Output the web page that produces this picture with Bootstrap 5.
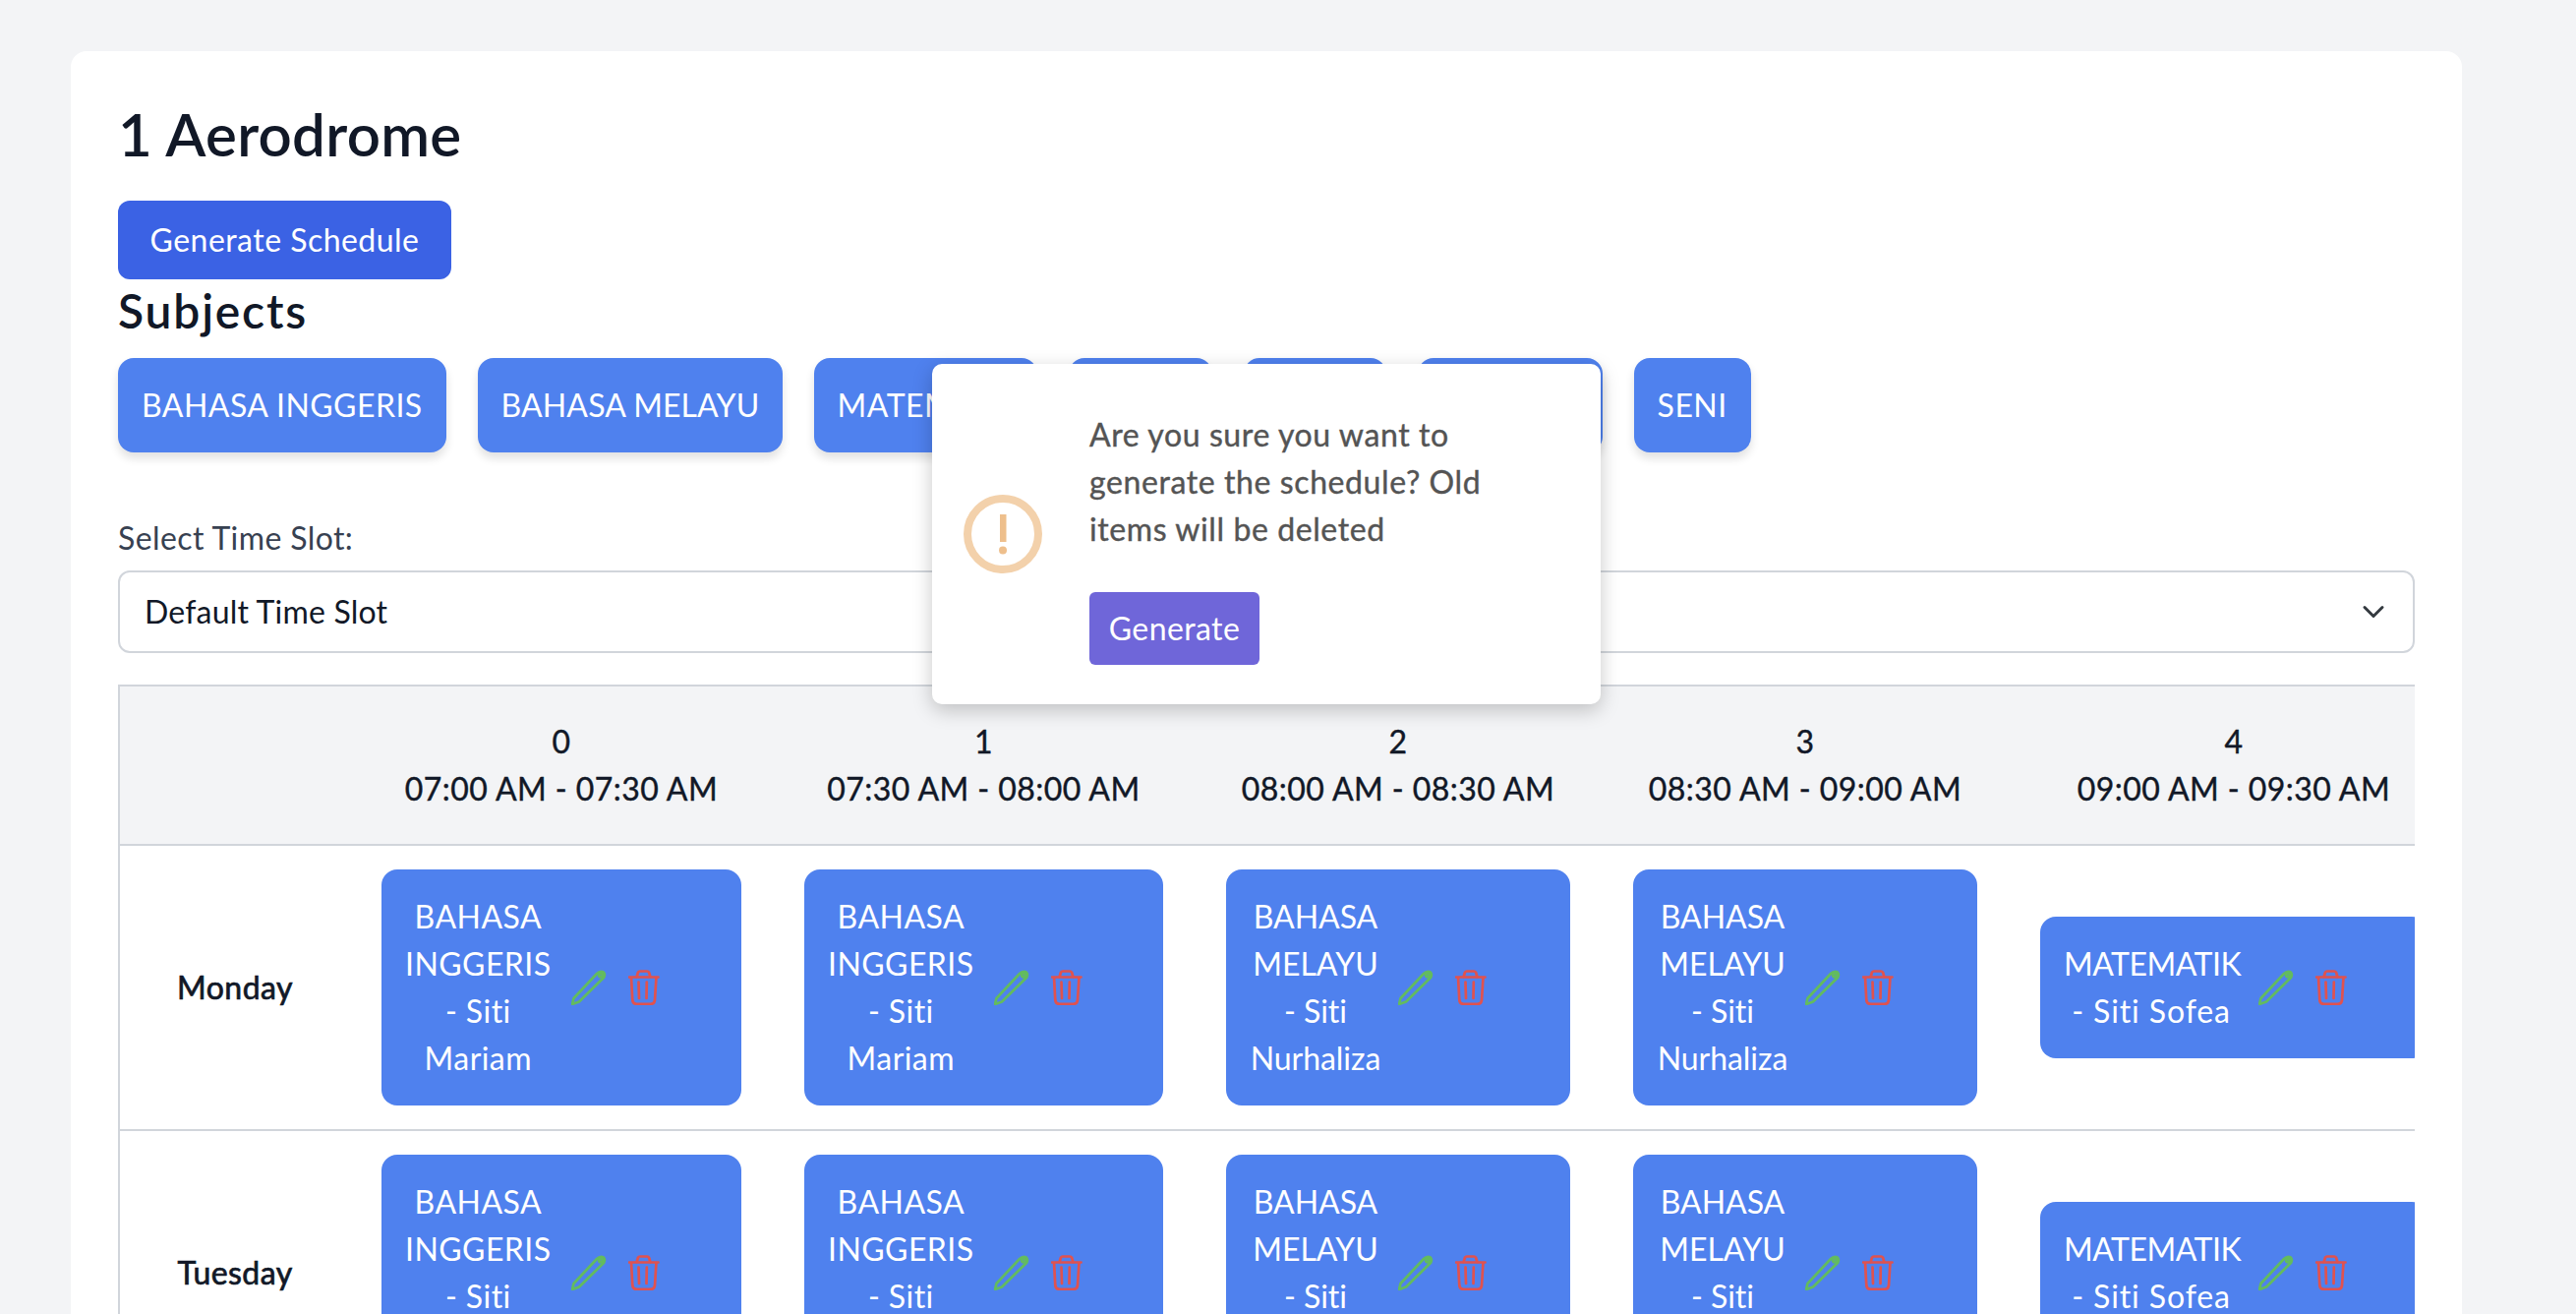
<!DOCTYPE html>
<html lang="en">
<head>
<meta charset="utf-8">
<title>1 Aerodrome</title>
<link rel="stylesheet" href="https://cdn.jsdelivr.net/npm/bootstrap@5.3.0/dist/css/bootstrap.min.css">
<style>
html,body{height:100%;}
body{background:#f3f4f6;font-family:"Lato","Liberation Sans",sans-serif;color:#111827;font-size:32px;line-height:48px;letter-spacing:.45px;}
.page-wrap{padding:52px 116px 0 72px;}
.main-panel{background:#fff;border-radius:16px;padding:48px;position:relative;}
.page-title{font-family:inherit;font-size:60px;line-height:72px;font-weight:600;margin:0 0 32px;color:#111827;letter-spacing:.3px;}
.gen-btn{display:block;background:#3b62e4;color:#fff;border:0;border-radius:12px;height:80px;width:339px;padding:0;font-size:32px;line-height:48px;letter-spacing:.47px;}
.section-title{font-size:48px;line-height:64px;font-weight:600;margin:0 0 16px;color:#111827;letter-spacing:1.8px;}
.subject-row{gap:32px;}
.subject-chip{background:#4f81ee;color:#fff;border-radius:16px;padding:24px;height:96px;box-shadow:0 6px 10px rgba(0,0,0,.12);white-space:nowrap;overflow:hidden;}
.chip-w2{width:310px;flex:none;letter-spacing:.1px;}.chip-w3{width:227px;flex:none;}.chip-w4{width:146px;flex:none;}.chip-w5{width:145px;flex:none;}.chip-w6{width:188px;flex:none;}.chip-w7{width:119px;flex:none;}
.slot-label{font-size:32px;line-height:40px;color:#374151;margin:67px 0 0;padding:0;display:block;height:53px;letter-spacing:.4px;}
.slot-select{height:84px;font-size:32px;line-height:48px;padding:16px 25px;border:2px solid #d1d5db;border-radius:12px;color:#111827;background-size:32px 24px;background-position:right 24px center;font-family:inherit;letter-spacing:.2px;}
.table-clip{overflow:hidden;margin-top:32px;}
.sched-table{table-layout:fixed;width:2379px;margin:0;border-collapse:separate;border-spacing:0;border-left:2px solid #d1d5db;border-top:2px solid #d1d5db;box-sizing:content-box;}
.sched-table>:not(caption)>*>*{padding:24px 32px;border-bottom:2px solid #d1d5db;box-shadow:none;background:transparent;color:#111827;}
.sched-table>thead>tr>th{background:#f3f4f6;padding:32px 16px;font-weight:400;-webkit-text-stroke:.4px #111827;text-align:center;height:162px;}
.sched-table>tbody>tr>th{font-weight:400;-webkit-text-stroke:.7px #111827;text-align:center;vertical-align:middle;padding:24px 0;}
.sched-table>tbody>tr>td{vertical-align:middle;}
.c-day{width:234px}.c-a{width:430px}.c-b{width:429px}.c-c{width:414px}.c-d{width:414px}.c-e{width:458px}
.slot-chip{background:#4f81ee;color:#fff;border-radius:16px;padding:24px;display:flex;align-items:center;}
.slot-text{text-align:center;margin-right:20px;}
.slot-text-nur{width:134px;flex:none;letter-spacing:-.05px;margin-right:17px;}
.slot-text-wide{width:178px;flex:none;}
.tight-line{letter-spacing:-.5px;}
.loose-line{letter-spacing:.9px;}
.ico-edit{display:block;width:36px;height:36px;flex:none;color:#63bb5f;margin-right:22px;stroke-width:2.7;}
.ico-del{display:block;width:32px;height:36px;flex:none;color:#e0524f;stroke-width:2.7;}
.confirm-pop{position:absolute;left:876px;top:318px;width:680px;height:346px;background:#fff;border-radius:10px;box-shadow:0 6px 20px rgba(0,0,0,.22);padding:0 32px;z-index:5;gap:48px;}
.warn-ico{width:80px;height:80px;flex:none;}
.confirm-text{font-weight:400;-webkit-text-stroke:.4px #545454;color:#545454;line-height:48px;margin:0 0 40px;padding-top:8px;width:440px;letter-spacing:.6px;}
.confirm-btn{background:#6f66d9;color:#fff;border:0;border-radius:6px;width:173px;height:74px;padding:0;font-size:32px;line-height:48px;display:block;letter-spacing:.4px;}
</style>
</head>
<body class="overflow-hidden">
<div class="page-wrap">
<div class="main-panel">
  <h1 class="page-title">1 Aerodrome</h1>
  <button type="button" class="btn gen-btn">Generate Schedule</button>
  <h2 class="section-title">Subjects</h2>
  <div class="d-flex subject-row">
    <div class="subject-chip">BAHASA INGGERIS</div>
    <div class="subject-chip chip-w2">BAHASA MELAYU</div>
    <div class="subject-chip chip-w3">MATEMATIK</div>
    <div class="subject-chip chip-w4">SAINS</div>
    <div class="subject-chip chip-w5">MUZIK</div>
    <div class="subject-chip chip-w6">SEJARAH</div>
    <div class="subject-chip chip-w7">SENI</div>
  </div>
  <label class="form-label slot-label" for="slot">Select Time Slot:</label>
  <select class="form-select slot-select" id="slot"><option>Default Time Slot</option></select>

  <div class="table-clip">
  <table class="table sched-table">
    <colgroup><col class="c-day"><col class="c-a"><col class="c-b"><col class="c-c"><col class="c-d"><col class="c-e"></colgroup>
    <thead><tr>
      <th></th>
      <th>0<br>07:00 AM - 07:30 AM</th>
      <th>1<br>07:30 AM - 08:00 AM</th>
      <th>2<br>08:00 AM - 08:30 AM</th>
      <th>3<br>08:30 AM - 09:00 AM</th>
      <th>4<br>09:00 AM - 09:30 AM</th>
    </tr></thead>
    <tbody>
    <tr>
      <th>Monday</th>
      <td><div class="slot-chip"><div class="slot-text">BAHASA<br>INGGERIS<br>- Siti<br>Mariam</div><svg class="ico-edit" viewBox="0 0 36 36" fill="none" stroke="currentColor" stroke-linejoin="round" aria-hidden="true"><path d="M1 35 2.5 29 26 4Q29 1 32.500 2.200 35 4.500 33 8L8 32.500Z"/><circle cx="30" cy="5.500" r="1.800"/></svg><svg class="ico-del" viewBox="0 0 32 36" fill="none" stroke="currentColor" stroke-linecap="round" stroke-linejoin="round" aria-hidden="true"><path d="M1 7.500H30.500M8.500 7.500 10 2.500Q10.500 1.500 12 1.500H19Q20.500 1.500 21 2.500L22.500 7.500M3 7.500 4.300 31Q4.800 34.800 8.500 34.800H22.800Q26.500 34.800 27 31L28.500 7.500M10.500 12.500 11 29M18.800 12.500 18.500 29"/></svg></div></td>
      <td><div class="slot-chip"><div class="slot-text">BAHASA<br>INGGERIS<br>- Siti<br>Mariam</div><svg class="ico-edit" viewBox="0 0 36 36" fill="none" stroke="currentColor" stroke-linejoin="round" aria-hidden="true"><path d="M1 35 2.5 29 26 4Q29 1 32.500 2.200 35 4.500 33 8L8 32.500Z"/><circle cx="30" cy="5.500" r="1.800"/></svg><svg class="ico-del" viewBox="0 0 32 36" fill="none" stroke="currentColor" stroke-linecap="round" stroke-linejoin="round" aria-hidden="true"><path d="M1 7.500H30.500M8.500 7.500 10 2.500Q10.500 1.500 12 1.500H19Q20.500 1.500 21 2.500L22.500 7.500M3 7.500 4.300 31Q4.800 34.800 8.500 34.800H22.800Q26.500 34.800 27 31L28.500 7.500M10.500 12.500 11 29M18.800 12.500 18.500 29"/></svg></div></td>
      <td><div class="slot-chip"><div class="slot-text slot-text-nur">BAHASA<br>MELAYU<br>- Siti<br>Nurhaliza</div><svg class="ico-edit" viewBox="0 0 36 36" fill="none" stroke="currentColor" stroke-linejoin="round" aria-hidden="true"><path d="M1 35 2.5 29 26 4Q29 1 32.500 2.200 35 4.500 33 8L8 32.500Z"/><circle cx="30" cy="5.500" r="1.800"/></svg><svg class="ico-del" viewBox="0 0 32 36" fill="none" stroke="currentColor" stroke-linecap="round" stroke-linejoin="round" aria-hidden="true"><path d="M1 7.500H30.500M8.500 7.500 10 2.500Q10.500 1.500 12 1.500H19Q20.500 1.500 21 2.500L22.500 7.500M3 7.500 4.300 31Q4.800 34.800 8.500 34.800H22.800Q26.500 34.800 27 31L28.500 7.500M10.500 12.500 11 29M18.800 12.500 18.500 29"/></svg></div></td>
      <td><div class="slot-chip"><div class="slot-text slot-text-nur">BAHASA<br>MELAYU<br>- Siti<br>Nurhaliza</div><svg class="ico-edit" viewBox="0 0 36 36" fill="none" stroke="currentColor" stroke-linejoin="round" aria-hidden="true"><path d="M1 35 2.5 29 26 4Q29 1 32.500 2.200 35 4.500 33 8L8 32.500Z"/><circle cx="30" cy="5.500" r="1.800"/></svg><svg class="ico-del" viewBox="0 0 32 36" fill="none" stroke="currentColor" stroke-linecap="round" stroke-linejoin="round" aria-hidden="true"><path d="M1 7.500H30.500M8.500 7.500 10 2.500Q10.500 1.500 12 1.500H19Q20.500 1.500 21 2.500L22.500 7.500M3 7.500 4.300 31Q4.800 34.800 8.500 34.800H22.800Q26.500 34.800 27 31L28.500 7.500M10.500 12.500 11 29M18.800 12.500 18.500 29"/></svg></div></td>
      <td><div class="slot-chip"><div class="slot-text slot-text-wide"><span class="tight-line">MATEMATIK</span><br><span class="loose-line">- Siti Sofea</span></div><svg class="ico-edit" viewBox="0 0 36 36" fill="none" stroke="currentColor" stroke-linejoin="round" aria-hidden="true"><path d="M1 35 2.5 29 26 4Q29 1 32.500 2.200 35 4.500 33 8L8 32.500Z"/><circle cx="30" cy="5.500" r="1.800"/></svg><svg class="ico-del" viewBox="0 0 32 36" fill="none" stroke="currentColor" stroke-linecap="round" stroke-linejoin="round" aria-hidden="true"><path d="M1 7.500H30.500M8.500 7.500 10 2.500Q10.500 1.500 12 1.500H19Q20.500 1.500 21 2.500L22.500 7.500M3 7.500 4.300 31Q4.800 34.800 8.500 34.800H22.800Q26.500 34.800 27 31L28.500 7.500M10.500 12.500 11 29M18.800 12.500 18.500 29"/></svg></div></td>
    </tr>
    <tr>
      <th>Tuesday</th>
      <td><div class="slot-chip"><div class="slot-text">BAHASA<br>INGGERIS<br>- Siti<br>Mariam</div><svg class="ico-edit" viewBox="0 0 36 36" fill="none" stroke="currentColor" stroke-linejoin="round" aria-hidden="true"><path d="M1 35 2.5 29 26 4Q29 1 32.500 2.200 35 4.500 33 8L8 32.500Z"/><circle cx="30" cy="5.500" r="1.800"/></svg><svg class="ico-del" viewBox="0 0 32 36" fill="none" stroke="currentColor" stroke-linecap="round" stroke-linejoin="round" aria-hidden="true"><path d="M1 7.500H30.500M8.500 7.500 10 2.500Q10.500 1.500 12 1.500H19Q20.500 1.500 21 2.500L22.500 7.500M3 7.500 4.300 31Q4.800 34.800 8.500 34.800H22.800Q26.500 34.800 27 31L28.500 7.500M10.500 12.500 11 29M18.800 12.500 18.500 29"/></svg></div></td>
      <td><div class="slot-chip"><div class="slot-text">BAHASA<br>INGGERIS<br>- Siti<br>Mariam</div><svg class="ico-edit" viewBox="0 0 36 36" fill="none" stroke="currentColor" stroke-linejoin="round" aria-hidden="true"><path d="M1 35 2.5 29 26 4Q29 1 32.500 2.200 35 4.500 33 8L8 32.500Z"/><circle cx="30" cy="5.500" r="1.800"/></svg><svg class="ico-del" viewBox="0 0 32 36" fill="none" stroke="currentColor" stroke-linecap="round" stroke-linejoin="round" aria-hidden="true"><path d="M1 7.500H30.500M8.500 7.500 10 2.500Q10.500 1.500 12 1.500H19Q20.500 1.500 21 2.500L22.500 7.500M3 7.500 4.300 31Q4.800 34.800 8.500 34.800H22.800Q26.500 34.800 27 31L28.500 7.500M10.500 12.500 11 29M18.800 12.500 18.500 29"/></svg></div></td>
      <td><div class="slot-chip"><div class="slot-text slot-text-nur">BAHASA<br>MELAYU<br>- Siti<br>Nurhaliza</div><svg class="ico-edit" viewBox="0 0 36 36" fill="none" stroke="currentColor" stroke-linejoin="round" aria-hidden="true"><path d="M1 35 2.5 29 26 4Q29 1 32.500 2.200 35 4.500 33 8L8 32.500Z"/><circle cx="30" cy="5.500" r="1.800"/></svg><svg class="ico-del" viewBox="0 0 32 36" fill="none" stroke="currentColor" stroke-linecap="round" stroke-linejoin="round" aria-hidden="true"><path d="M1 7.500H30.500M8.500 7.500 10 2.500Q10.500 1.500 12 1.500H19Q20.500 1.500 21 2.500L22.500 7.500M3 7.500 4.300 31Q4.800 34.800 8.500 34.800H22.800Q26.500 34.800 27 31L28.500 7.500M10.500 12.500 11 29M18.800 12.500 18.500 29"/></svg></div></td>
      <td><div class="slot-chip"><div class="slot-text slot-text-nur">BAHASA<br>MELAYU<br>- Siti<br>Nurhaliza</div><svg class="ico-edit" viewBox="0 0 36 36" fill="none" stroke="currentColor" stroke-linejoin="round" aria-hidden="true"><path d="M1 35 2.5 29 26 4Q29 1 32.500 2.200 35 4.500 33 8L8 32.500Z"/><circle cx="30" cy="5.500" r="1.800"/></svg><svg class="ico-del" viewBox="0 0 32 36" fill="none" stroke="currentColor" stroke-linecap="round" stroke-linejoin="round" aria-hidden="true"><path d="M1 7.500H30.500M8.500 7.500 10 2.500Q10.500 1.500 12 1.500H19Q20.500 1.500 21 2.500L22.500 7.500M3 7.500 4.300 31Q4.800 34.800 8.500 34.800H22.800Q26.500 34.800 27 31L28.500 7.500M10.500 12.500 11 29M18.800 12.500 18.500 29"/></svg></div></td>
      <td><div class="slot-chip"><div class="slot-text slot-text-wide"><span class="tight-line">MATEMATIK</span><br><span class="loose-line">- Siti Sofea</span></div><svg class="ico-edit" viewBox="0 0 36 36" fill="none" stroke="currentColor" stroke-linejoin="round" aria-hidden="true"><path d="M1 35 2.5 29 26 4Q29 1 32.500 2.200 35 4.500 33 8L8 32.500Z"/><circle cx="30" cy="5.500" r="1.800"/></svg><svg class="ico-del" viewBox="0 0 32 36" fill="none" stroke="currentColor" stroke-linecap="round" stroke-linejoin="round" aria-hidden="true"><path d="M1 7.500H30.500M8.500 7.500 10 2.500Q10.500 1.500 12 1.500H19Q20.500 1.500 21 2.500L22.500 7.500M3 7.500 4.300 31Q4.800 34.800 8.500 34.800H22.800Q26.500 34.800 27 31L28.500 7.500M10.500 12.500 11 29M18.800 12.500 18.500 29"/></svg></div></td>
    </tr>
    </tbody>
  </table>
  </div>

  <div class="confirm-pop d-flex align-items-center">
    <svg class="warn-ico" viewBox="0 0 80 80" aria-hidden="true"><circle cx="40" cy="40" r="36" fill="none" stroke="#f3d1ab" stroke-width="8"/><rect x="37" y="20" width="6.500" height="28" fill="#eebf8c"/><circle cx="40" cy="56.500" r="4" fill="#eebf8c"/></svg>
    <div>
      <p class="confirm-text">Are you sure you want to generate the schedule? Old items will be deleted</p>
      <button type="button" class="btn confirm-btn">Generate</button>
    </div>
  </div>
</div>
</div>
<script src="https://cdn.jsdelivr.net/npm/bootstrap@5.3.0/dist/js/bootstrap.bundle.min.js"></script>
</body>
</html>
